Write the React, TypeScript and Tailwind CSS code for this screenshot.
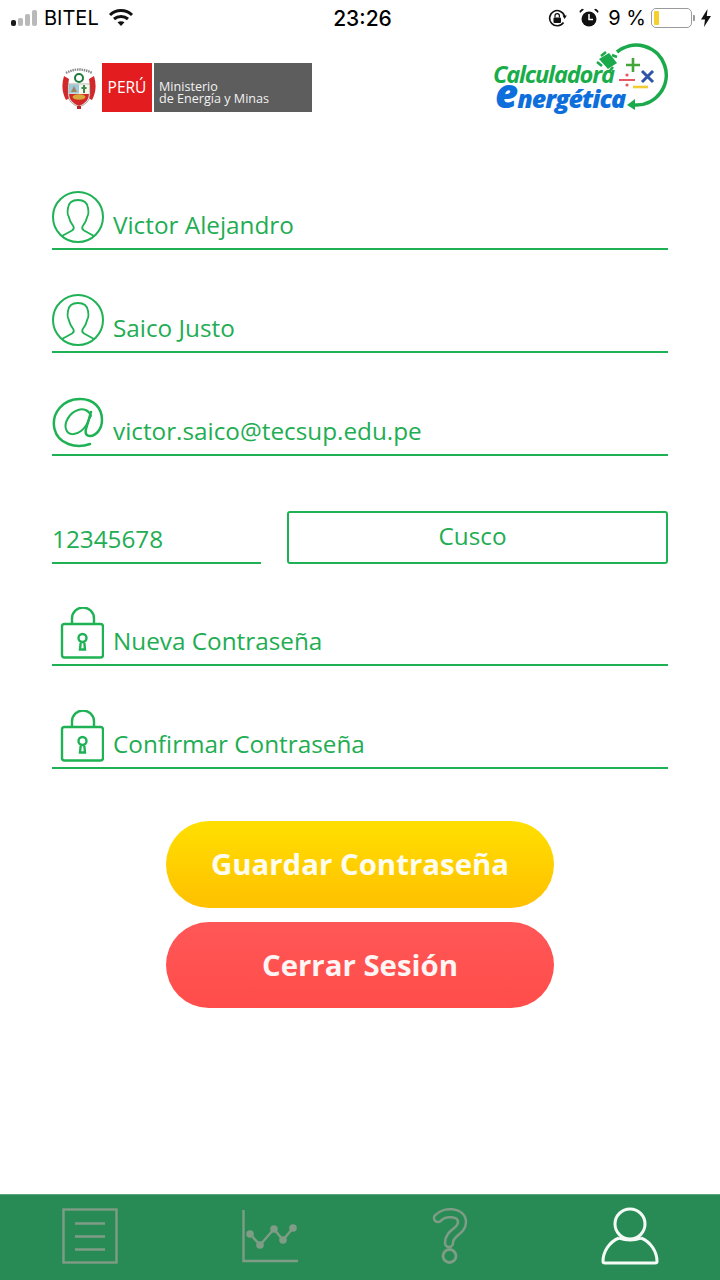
import type { ReactNode } from 'react'

const green = '#1fb254'

function PersonIcon() {
  return (
    <svg width="52" height="52" viewBox="0 0 52 52" fill="none" stroke={green} strokeWidth="1.8" className="shrink-0">
      <circle cx="26" cy="26" r="25" strokeWidth="2" />
      <path d="M10 45 L20 39.5 Q22.5 38 21.5 35.5 Q17.5 30 16.5 25 Q15 23 16 17 Q17 9 26 9 Q35 9 36 17 Q37 23 35.5 25 Q34.5 30 30.5 35.5 Q29.5 38 32 39.5 L42 45" />
    </svg>
  )
}

function AtIcon() {
  return (
    <svg width="52" height="52" viewBox="0 0 52 52" fill="none" stroke={green} strokeWidth="2.5" strokeLinecap="round" className="shrink-0">
      <path d="M38 47 C24 52 6 47 2.5 32 C-1 16 11 2 28 2 C42 2 50 11 50 23 C50 32 44 39 38 39 C34 39 33 36 34 32 L39 15" />
      <path d="M39 19 C37 13 31 11 26 13 C17 16 12 26 14 32 C16 39 24 38 29 34 C33 31 36 26 38 20" strokeWidth="2" />
    </svg>
  )
}

function LockIcon() {
  return (
    <svg width="52" height="52" viewBox="0 0 52 52" fill="none" stroke={green} strokeWidth="2.4" className="shrink-0">
      <path d="M20 18 V12 A11 11 0 0 1 42 12 V18" transform="translate(0 -0.5)" />
      <rect x="10" y="17" width="41" height="33.5" rx="2.5" />
      <path d="M30.5 27 A4 4 0 0 1 30.5 35 A4 4 0 0 1 30.5 27 Z M28.8 34.5 L28 42.5 H33 L32.2 34.5" strokeWidth="2.4" />
    </svg>
  )
}

function Field({ icon, text }: { icon: ReactNode; text: string }) {
  return (
    <div className="flex h-[59px] items-start gap-[9px] border-b-2 border-[#1fb254]">
      {icon}
      <span className="mt-[17px] text-[24.3px] leading-[33px] text-[#22ad53]">{text}</span>
    </div>
  )
}

function StatusBar() {
  return (
    <div className="flex h-[36px] items-center justify-between pl-[11px] pr-[9px] font-['Inter',sans-serif] text-black">
      <div className="flex w-[200px] items-center">
        <div className="flex items-end gap-[2px]">
          <div className="h-[6px] w-[5px] rounded-[2px] bg-[#1a1a1a]" />
          <div className="h-[8px] w-[5px] rounded-[2px] bg-[#b9b9b9]" />
          <div className="h-[12px] w-[5px] rounded-[2px] bg-[#b9b9b9]" />
          <div className="h-[16px] w-[5px] rounded-[2px] bg-[#b9b9b9]" />
        </div>
        <span className="ml-[7px] text-[20px] leading-none">BITEL</span>
        <svg width="26" height="20" viewBox="0 0 26 20" className="ml-[9px]" fill="none" stroke="#111" strokeWidth="3">
          <path d="M2 7 C8 1 18 1 24 7" />
          <path d="M6 11 C10 7.5 16 7.5 20 11" />
          <path d="M13 18 L9.5 14.2 C11.5 12.8 14.5 12.8 16.5 14.2 Z" fill="#111" stroke="none" />
        </svg>
      </div>
      <span className="ml-[3px] text-[21px] font-medium leading-none">23:26</span>
      <div className="flex w-[200px] items-center justify-end">
        <svg width="19" height="19" viewBox="0 0 19 19" fill="none" stroke="#111" strokeWidth="1.6">
          <path d="M15.5 13.5 A7.6 7.6 0 1 1 16.5 7" />
          <path d="M18.8 6.5 L14.5 6.5 L16.6 10 Z" fill="#111" stroke="none" />
          <rect x="5.5" y="8.5" width="7.5" height="5.5" rx="1" fill="#111" stroke="none" />
          <path d="M7 8.5 V6.8 A2.2 2.2 0 0 1 11.4 6.8 V8.5" strokeWidth="1.2" />
        </svg>
        <svg width="20" height="20" viewBox="0 0 20 20" className="ml-[12px]">
          <circle cx="10" cy="11" r="7.5" fill="#111" />
          <path d="M10 6 V11.5 H14" fill="none" stroke="#fff" strokeWidth="1.5" />
          <path d="M1 5 L5 1.5 L3 .8 L.5 3 Z M19 5 L15 1.5 L17 .8 L19.5 3 Z" fill="#111" />
        </svg>
        <span className="ml-[9px] text-[20px] leading-none">9 %</span>
        <div className="ml-[5px] flex h-[20px] w-[41px] rounded-[5px] border border-[#9a9a9a] p-[2px]">
          <div className="h-full w-[5px] rounded-[1px] bg-[#f6cf2f]" />
        </div>
        <div className="ml-[1px] h-[6px] w-[2px] rounded-r-[1px] bg-[#9a9a9a]" />
        <svg width="10" height="18" viewBox="0 0 10 18" className="ml-[6px]">
          <path d="M6.5 0 L0 10.5 H4 L3 18 L10 7 H5.8 Z" fill="#111" />
        </svg>
      </div>
    </div>
  )
}

function Crest() {
  return (
    <svg width="36" height="42" viewBox="0 0 36 42">
      <path d="M5 6 Q18 -1 31 6" fill="none" stroke="#8a8a8a" strokeWidth="2.4" strokeDasharray="1.5 .8" />
      <circle cx="18" cy="11" r="4" fill="none" stroke="#1f7a3a" strokeWidth="2" />
      <path d="M3 9 Q-1 22 5 33 L9 31 Q6 22 8 12 Z" fill="#d3272a" />
      <path d="M33 9 Q37 22 31 33 L27 31 Q30 22 28 12 Z" fill="#d3272a" />
      <path d="M7 17 H29 V28 Q29 36 18 40 Q7 36 7 28 Z" fill="#f4ecdc" stroke="#777" strokeWidth=".6" />
      <rect x="8" y="17.5" width="10" height="9" fill="#9fc8d8" />
      <rect x="18" y="17.5" width="10" height="9" fill="#f7f5ec" />
      <path d="M23 18 V26 M20.5 21 H25.5" stroke="#3c8a48" strokeWidth="2" />
      <path d="M13 19 L16 25 H10 Z" fill="#a08560" />
      <path d="M8 27 H28 Q28 35 18 39 Q8 35 8 27 Z" fill="#d3272a" />
      <ellipse cx="18" cy="30" rx="6.5" ry="2.8" fill="#d7a83a" />
      <path d="M16 39 H20 V42 H16 Z" fill="#b8232a" />
    </svg>
  )
}

function AppLogo() {
  return (
    <svg width="176" height="72" viewBox="0 0 176 72" className="font-['Open_Sans',sans-serif]">
      <path d="M124 9 A30 30 0 1 1 142 62" fill="none" stroke="#1aaa4c" strokeWidth="3.6" />
      <path d="M106 16 L116 10 L124 20 L115 26 Z" fill="#1aaa4c" />
      <path d="M104 19 L109 23 M108 13 L113 9 M120 24 L116 29 M124 14 L119 12" stroke="#1aaa4c" strokeWidth="2.6" />
      <text x="0" y="40" fontSize="23.6" fontWeight="700" fontStyle="italic" fill="#19ad4a" letterSpacing="-1.2">Calculadora</text>
      <text x="2" y="65" fontWeight="800" fontStyle="italic" fill="#0e6fdc">
        <tspan fontSize="40" letterSpacing="-1">e</tspan>
        <tspan fontSize="25" letterSpacing="-1">nergética</tspan>
      </text>
      <path d="M133 22 H147 M140 15 V29" stroke="#43a53a" strokeWidth="2.6" />
      <path d="M149 28 L160 39 M160 28 L149 39" stroke="#2e56a8" strokeWidth="3" />
      <path d="M126 37 H142" stroke="#e35a62" strokeWidth="2" />
      <circle cx="134" cy="32" r="1.6" fill="#e35a62" />
      <circle cx="134" cy="42" r="1.6" fill="#e35a62" />
      <path d="M140 44 H155" stroke="#f2cc33" strokeWidth="2.6" />
      <path d="M134 62 L142 56 V67 Z" fill="#1aaa4c" />
    </svg>
  )
}

function Header() {
  return (
    <div className="mt-[7px] flex items-start justify-between pl-[61px] pr-[51px]">
      <div className="mt-[20px] flex items-center">
        <Crest />
        <div className="ml-[5px] flex h-[49px] w-[50px] items-center justify-center bg-[#e31d1f] text-[15.5px] text-white">
          PERÚ
        </div>
        <div className="ml-[2px] flex h-[49px] w-[158px] flex-col justify-center bg-[#5d5d5d] pl-[5px] pt-[10px] text-[12.6px] leading-[12px] text-[#f2f2f2]">
          <span>Ministerio</span>
          <span>de Energía y Minas</span>
        </div>
      </div>
      <AppLogo />
    </div>
  )
}

function BottomNav() {
  const dim = '#7f9c86'
  return (
    <div className="grid h-[86px] grid-cols-4 items-center border-t border-[#5fa67f] bg-[#288b55] pb-[3px]">
      <div className="flex justify-center">
        <svg width="56" height="56" viewBox="0 0 56 56" fill="none" stroke={dim} strokeWidth="2.4">
          <rect x="1.5" y="1.5" width="53" height="53" />
          <path d="M13 15.5 H43 M13 28.5 H43 M13 41.5 H43" />
        </svg>
      </div>
      <div className="flex justify-center">
        <svg width="56" height="56" viewBox="0 0 56 56" fill="none" stroke={dim} strokeWidth="2.4">
          <path d="M1.5 2 V53 H56" />
          <path d="M8 26 L18 37 L32 21 L41 32 L51 20" />
          <g fill={dim} stroke="none">
            <circle cx="8" cy="26" r="3.8" />
            <circle cx="18" cy="37" r="3.8" />
            <circle cx="32" cy="21" r="3.8" />
            <circle cx="41" cy="32" r="3.8" />
            <circle cx="51" cy="20" r="3.8" />
          </g>
        </svg>
      </div>
      <div className="flex justify-center">
        <svg width="36" height="58" viewBox="0 0 36 58" fill="none" strokeLinecap="round">
          <path d="M6 11 C12 4 30 4 30 15 C30 25 17 25 17 36" stroke={dim} strokeWidth="10.5" />
          <path d="M6 11 C12 4 30 4 30 15 C30 25 17 25 17 36" stroke="#288b55" strokeWidth="5.5" />
          <circle cx="17.5" cy="49" r="6.5" stroke={dim} strokeWidth="2.8" />
        </svg>
      </div>
      <div className="flex justify-center">
        <svg width="58" height="58" viewBox="0 0 58 58" fill="none" stroke="#f4fbf6" strokeWidth="3">
          <circle cx="29" cy="17" r="15" />
          <path d="M18 31 C8 35 2 45 2 54.5 Q2 56 4 56 H54 Q56 56 56 54.5 C56 45 50 35 40 31" />
          <path d="M18 31 Q29 35 40 31" />
        </svg>
      </div>
    </div>
  )
}

export default function App() {
  return (
    <div className="flex h-[1280px] w-[720px] flex-col bg-white font-['Open_Sans',sans-serif]">
      <StatusBar />
      <Header />

      <div className="mt-[76px] flex flex-1 flex-col px-[52px]">
        <Field icon={<PersonIcon />} text="Victor Alejandro" />
        <div className="mt-[44px]">
          <Field icon={<PersonIcon />} text="Saico Justo" />
        </div>
        <div className="mt-[44px]">
          <Field icon={<AtIcon />} text="victor.saico@tecsup.edu.pe" />
        </div>

        <div className="mt-[55px] flex items-end gap-[26px]">
          <div className="flex h-[40px] w-[209px] items-end border-b-2 border-[#1fb254] pb-[7px] text-[24.3px] leading-[33px] text-[#22ad53]">
            12345678
          </div>
          <div className="flex h-[53px] flex-1 items-center justify-center rounded-[3px] border-2 border-[#1fb254] pb-[2px] pr-[10px] text-[24.3px] text-[#22ad53]">
            Cusco
          </div>
        </div>

        <div className="mt-[43px]">
          <Field icon={<LockIcon />} text="Nueva Contraseña" />
        </div>
        <div className="mt-[44px]">
          <Field icon={<LockIcon />} text="Confirmar Contraseña" />
        </div>

        <div className="mt-[52px] flex flex-col items-center gap-[14px]">
          <button className="h-[87px] w-[388px] rounded-[44px] bg-gradient-to-b from-[#ffdf00] to-[#ffc000] text-[29.4px] font-bold text-[#fffdf0]">
            Guardar Contraseña
          </button>
          <button className="h-[86px] w-[388px] rounded-[44px] bg-gradient-to-b from-[#ff5757] to-[#ff4d4a] text-[29.4px] font-bold text-[#fff5f5]">
            Cerrar Sesión
          </button>
        </div>
      </div>

      <BottomNav />
    </div>
  )
}
